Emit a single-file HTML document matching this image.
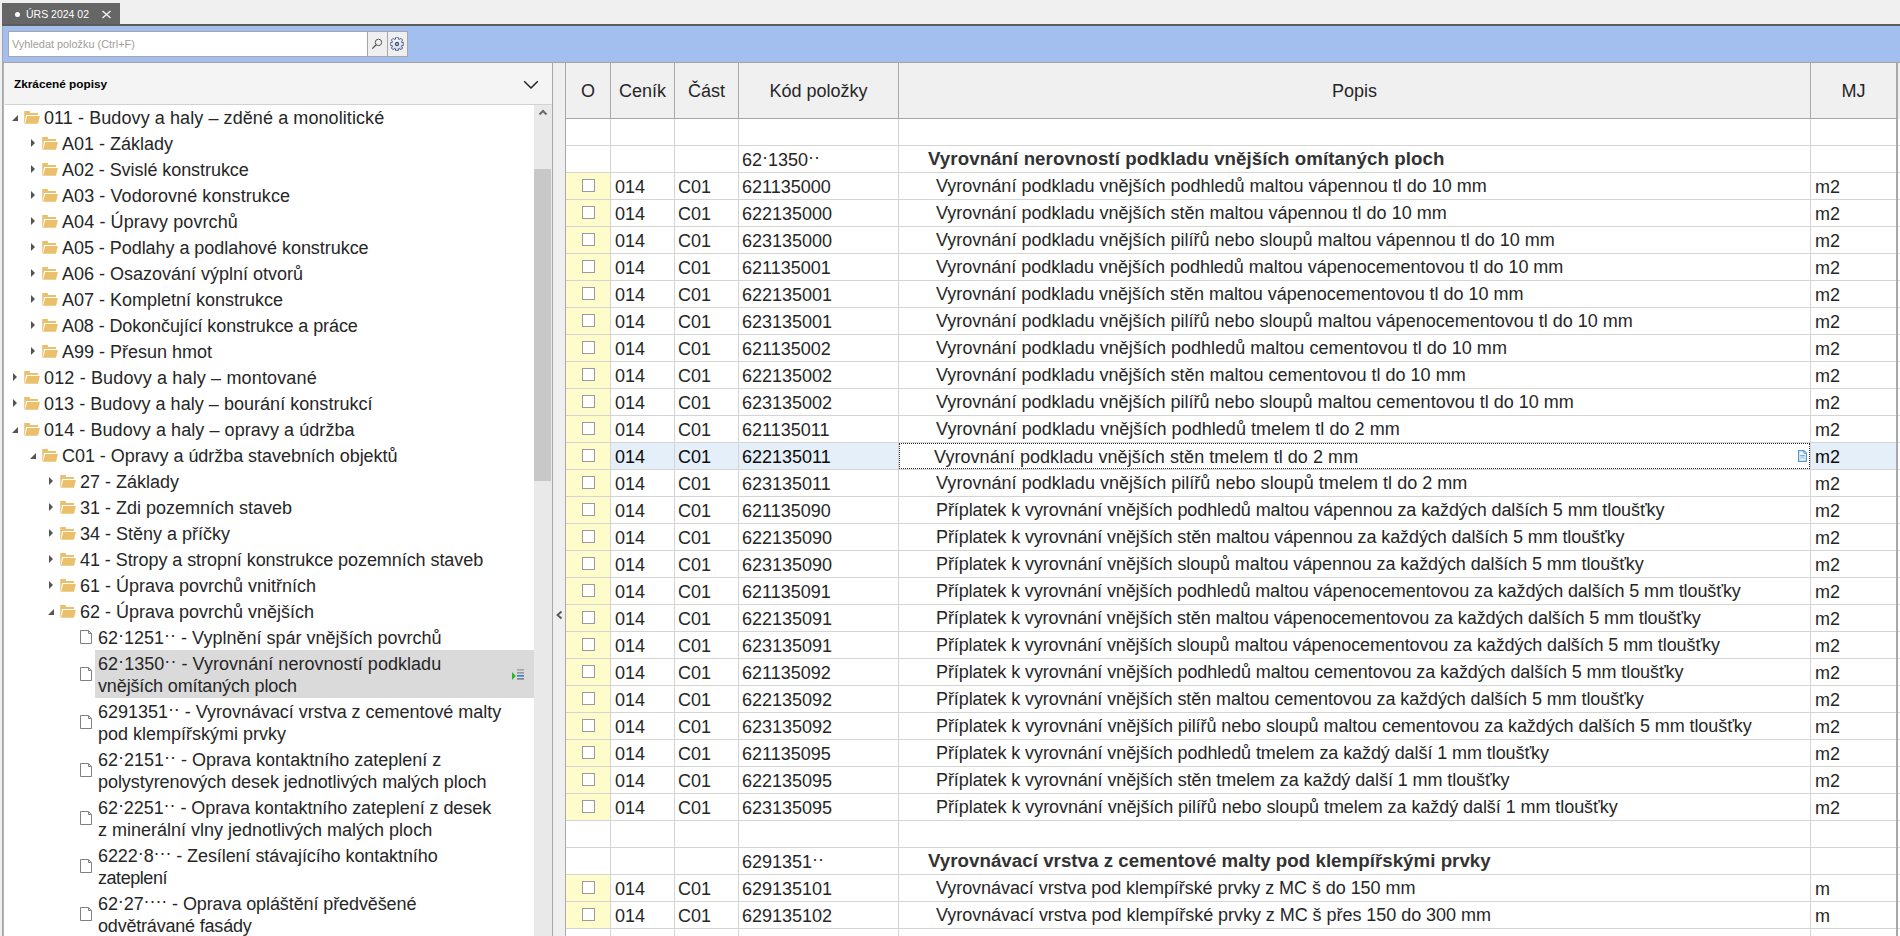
<!DOCTYPE html><html><head><meta charset="utf-8"><title>URS</title><style>
*{box-sizing:border-box}
html,body{margin:0;padding:0}
body{width:1900px;height:936px;overflow:hidden;position:relative;background:#f0f0f0;font-family:"Liberation Sans",sans-serif;color:#333}
.a{position:absolute}
.t{position:absolute;white-space:pre;font-size:18px;line-height:22px;color:#262626}
.hl{position:absolute;left:0;width:1px;background:#a8a8a8}
.vl{position:absolute;width:1px}
.cb{position:absolute;left:582px;width:13px;height:13px;border:1px solid #9b9b9f;background:#fff}
.tri{position:absolute}
.d{position:relative;top:-3px}
</style></head><body>
<div class="a" style="left:2px;top:3px;width:118px;height:22px;background:#666"></div>
<div class="a" style="left:14.5px;top:11.8px;width:5.6px;height:5.6px;border-radius:50%;background:#fff"></div>
<div class="t" style="left:26px;top:4px;font-size:10.5px;line-height:20px;color:#fff">ÚRS 2024 02</div>
<svg class="a" style="left:101px;top:10px" width="11" height="9" viewBox="0 0 11 9"><path d="M1.5 1 L9.5 8 M9.5 1 L1.5 8" stroke="#f2f2f2" stroke-width="1.4"/></svg>
<div class="a" style="left:2px;top:24px;width:1898px;height:2px;background:#5c5c5a"></div>
<div class="a" style="left:2px;top:26px;width:1px;height:910px;background:#a6a6a6"></div>
<div class="a" style="left:3px;top:26px;width:1897px;height:36px;background:#a2bff0"></div>
<div class="a" style="left:3px;top:62px;width:1897px;height:1px;background:#a4a4a4"></div>
<div class="a" style="left:8px;top:31px;width:360px;height:26px;border:1px solid #a6a6a6;background:#fff"></div>
<div class="t" style="left:12px;top:34px;font-size:10.9px;line-height:20px;color:#a59d98">Vyhledat položku (Ctrl+F)</div>
<div class="a" style="left:367px;top:31px;width:21px;height:26px;border:1px solid #a6a6a6;background:#efefef"></div>
<div class="a" style="left:387px;top:31px;width:21px;height:26px;border:1px solid #a6a6a6;background:#efefef"></div>
<svg class="a" style="left:370px;top:37px" width="14" height="14" viewBox="0 0 14 14"><circle cx="8.5" cy="5.4" r="3.2" fill="none" stroke="#555" stroke-width="1"/><path d="M6.2 7.7 L2.3 11.6" stroke="#555" stroke-width="1.3"/></svg>
<svg class="a" style="left:390px;top:37px" width="14" height="14" viewBox="0 0 14 14"><defs><radialGradient id="gg" cx="0.45" cy="0.35" r="0.7"><stop offset="0" stop-color="#fafbfd"/><stop offset="0.6" stop-color="#dde2ec"/><stop offset="1" stop-color="#a9b3c8"/></radialGradient></defs><path d="M5.37 2.27 L5.72 0.42 L6.40 0.13 L7.60 0.13 L8.28 0.42 L8.63 2.27 L9.19 2.51 L10.75 1.45 L11.44 1.71 L12.29 2.56 L12.55 3.25 L11.49 4.81 L11.73 5.37 L13.58 5.72 L13.87 6.40 L13.87 7.60 L13.58 8.28 L11.73 8.63 L11.49 9.19 L12.55 10.75 L12.29 11.44 L11.44 12.29 L10.75 12.55 L9.19 11.49 L8.63 11.73 L8.28 13.58 L7.60 13.87 L6.40 13.87 L5.72 13.58 L5.37 11.73 L4.81 11.49 L3.25 12.55 L2.56 12.29 L1.71 11.44 L1.45 10.75 L2.51 9.19 L2.27 8.63 L0.42 8.28 L0.13 7.60 L0.13 6.40 L0.42 5.72 L2.27 5.37 L2.51 4.81 L1.45 3.25 L1.71 2.56 L2.56 1.71 L3.25 1.45 L4.81 2.51 Z" fill="url(#gg)" stroke="#3b4d7e" stroke-width="0.9" stroke-linejoin="round"/><circle cx="7" cy="7" r="1.6" fill="#c9ccd3" stroke="#33467a" stroke-width="1.1"/></svg>
<div class="a" style="left:3px;top:63px;width:1px;height:873px;background:#b4b4b4"></div>
<div class="a" style="left:4px;top:63px;width:548px;height:41px;background:#f4f4f4"></div>
<div class="t" style="left:14px;top:74px;font-size:11.8px;line-height:20px;font-weight:bold;color:#000">Zkrácené popisy</div>
<svg class="a" style="left:523px;top:80px" width="16" height="10" viewBox="0 0 16 10"><path d="M1.2 1.2 L8 8 L14.8 1.2" fill="none" stroke="#222" stroke-width="1.5"/></svg>
<div class="a" style="left:5px;top:104px;width:547px;height:1px;background:#d2d2d2"></div>
<div class="a" style="left:4px;top:105px;width:530px;height:831px;background:#fff"></div>
<div class="a" style="left:534px;top:105px;width:18px;height:831px;background:#e9e9e9"></div>
<div class="a" style="left:534px;top:169px;width:17px;height:312px;background:#c8c8c8"></div>
<svg class="a" style="left:538px;top:108px" width="10" height="8" viewBox="0 0 10 8"><path d="M1.5 6.5 L5 3 L8.5 6.5" fill="none" stroke="#6a6a6a" stroke-width="2"/></svg>
<div class="a" style="left:552px;top:63px;width:1px;height:873px;background:#a8a8a8"></div>
<div class="a" style="left:553px;top:63px;width:12px;height:873px;background:#efefef"></div>
<svg class="a" style="left:555px;top:610px" width="9" height="10" viewBox="0 0 9 10"><path d="M6.5 1.5 L2.5 5 L6.5 8.5" fill="none" stroke="#555" stroke-width="1.8"/></svg>
<div class="a" style="left:4px;top:105px;width:530px;height:831px;overflow:hidden">
<svg class="a" style="left:8px;top:10px" width="7" height="7" viewBox="0 0 7 7"><path d="M6 0 V6 H0 Z" fill="#555"/></svg>
<svg class="a" style="left:20px;top:6px" width="17" height="14" viewBox="0 0 17 14"><path d="M0.2 0 H5.9 V2 H14 V3.9 H2 L0.6 12.8 H0.2 Z" fill="#ebc06d"/><path d="M3.2 5 H15.9 L14 12.8 H1.1 Z" fill="#ebc06d"/></svg>
<div class="t" style="left:40px;top:2px;letter-spacing:0.0825px">011 - Budovy a haly – zděné a monolitické</div>
<svg class="a" style="left:27px;top:34px" width="5" height="9" viewBox="0 0 5 9"><path d="M0 0 L4 4 L0 8 Z" fill="#555"/></svg>
<svg class="a" style="left:38px;top:32px" width="17" height="14" viewBox="0 0 17 14"><path d="M0.2 0 H5.9 V2 H14 V3.9 H2 L0.6 12.8 H0.2 Z" fill="#ebc06d"/><path d="M3.2 5 H15.9 L14 12.8 H1.1 Z" fill="#ebc06d"/></svg>
<div class="t" style="left:58px;top:28px">A01 - Základy</div>
<svg class="a" style="left:27px;top:60px" width="5" height="9" viewBox="0 0 5 9"><path d="M0 0 L4 4 L0 8 Z" fill="#555"/></svg>
<svg class="a" style="left:38px;top:58px" width="17" height="14" viewBox="0 0 17 14"><path d="M0.2 0 H5.9 V2 H14 V3.9 H2 L0.6 12.8 H0.2 Z" fill="#ebc06d"/><path d="M3.2 5 H15.9 L14 12.8 H1.1 Z" fill="#ebc06d"/></svg>
<div class="t" style="left:58px;top:54px;letter-spacing:-0.0591px">A02 - Svislé konstrukce</div>
<svg class="a" style="left:27px;top:86px" width="5" height="9" viewBox="0 0 5 9"><path d="M0 0 L4 4 L0 8 Z" fill="#555"/></svg>
<svg class="a" style="left:38px;top:84px" width="17" height="14" viewBox="0 0 17 14"><path d="M0.2 0 H5.9 V2 H14 V3.9 H2 L0.6 12.8 H0.2 Z" fill="#ebc06d"/><path d="M3.2 5 H15.9 L14 12.8 H1.1 Z" fill="#ebc06d"/></svg>
<div class="t" style="left:58px;top:80px;letter-spacing:0.0760px">A03 - Vodorovné konstrukce</div>
<svg class="a" style="left:27px;top:112px" width="5" height="9" viewBox="0 0 5 9"><path d="M0 0 L4 4 L0 8 Z" fill="#555"/></svg>
<svg class="a" style="left:38px;top:110px" width="17" height="14" viewBox="0 0 17 14"><path d="M0.2 0 H5.9 V2 H14 V3.9 H2 L0.6 12.8 H0.2 Z" fill="#ebc06d"/><path d="M3.2 5 H15.9 L14 12.8 H1.1 Z" fill="#ebc06d"/></svg>
<div class="t" style="left:58px;top:106px;letter-spacing:0.0895px">A04 - Úpravy povrchů</div>
<svg class="a" style="left:27px;top:138px" width="5" height="9" viewBox="0 0 5 9"><path d="M0 0 L4 4 L0 8 Z" fill="#555"/></svg>
<svg class="a" style="left:38px;top:136px" width="17" height="14" viewBox="0 0 17 14"><path d="M0.2 0 H5.9 V2 H14 V3.9 H2 L0.6 12.8 H0.2 Z" fill="#ebc06d"/><path d="M3.2 5 H15.9 L14 12.8 H1.1 Z" fill="#ebc06d"/></svg>
<div class="t" style="left:58px;top:132px;letter-spacing:-0.0457px">A05 - Podlahy a podlahové konstrukce</div>
<svg class="a" style="left:27px;top:164px" width="5" height="9" viewBox="0 0 5 9"><path d="M0 0 L4 4 L0 8 Z" fill="#555"/></svg>
<svg class="a" style="left:38px;top:162px" width="17" height="14" viewBox="0 0 17 14"><path d="M0.2 0 H5.9 V2 H14 V3.9 H2 L0.6 12.8 H0.2 Z" fill="#ebc06d"/><path d="M3.2 5 H15.9 L14 12.8 H1.1 Z" fill="#ebc06d"/></svg>
<div class="t" style="left:58px;top:158px">A06 - Osazování výplní otvorů</div>
<svg class="a" style="left:27px;top:190px" width="5" height="9" viewBox="0 0 5 9"><path d="M0 0 L4 4 L0 8 Z" fill="#555"/></svg>
<svg class="a" style="left:38px;top:188px" width="17" height="14" viewBox="0 0 17 14"><path d="M0.2 0 H5.9 V2 H14 V3.9 H2 L0.6 12.8 H0.2 Z" fill="#ebc06d"/><path d="M3.2 5 H15.9 L14 12.8 H1.1 Z" fill="#ebc06d"/></svg>
<div class="t" style="left:58px;top:184px">A07 - Kompletní konstrukce</div>
<svg class="a" style="left:27px;top:216px" width="5" height="9" viewBox="0 0 5 9"><path d="M0 0 L4 4 L0 8 Z" fill="#555"/></svg>
<svg class="a" style="left:38px;top:214px" width="17" height="14" viewBox="0 0 17 14"><path d="M0.2 0 H5.9 V2 H14 V3.9 H2 L0.6 12.8 H0.2 Z" fill="#ebc06d"/><path d="M3.2 5 H15.9 L14 12.8 H1.1 Z" fill="#ebc06d"/></svg>
<div class="t" style="left:58px;top:210px;letter-spacing:-0.0943px">A08 - Dokončující konstrukce a práce</div>
<svg class="a" style="left:27px;top:242px" width="5" height="9" viewBox="0 0 5 9"><path d="M0 0 L4 4 L0 8 Z" fill="#555"/></svg>
<svg class="a" style="left:38px;top:240px" width="17" height="14" viewBox="0 0 17 14"><path d="M0.2 0 H5.9 V2 H14 V3.9 H2 L0.6 12.8 H0.2 Z" fill="#ebc06d"/><path d="M3.2 5 H15.9 L14 12.8 H1.1 Z" fill="#ebc06d"/></svg>
<div class="t" style="left:58px;top:236px">A99 - Přesun hmot</div>
<svg class="a" style="left:9px;top:268px" width="5" height="9" viewBox="0 0 5 9"><path d="M0 0 L4 4 L0 8 Z" fill="#555"/></svg>
<svg class="a" style="left:20px;top:266px" width="17" height="14" viewBox="0 0 17 14"><path d="M0.2 0 H5.9 V2 H14 V3.9 H2 L0.6 12.8 H0.2 Z" fill="#ebc06d"/><path d="M3.2 5 H15.9 L14 12.8 H1.1 Z" fill="#ebc06d"/></svg>
<div class="t" style="left:40px;top:262px;letter-spacing:0.1500px">012 - Budovy a haly – montované</div>
<svg class="a" style="left:9px;top:294px" width="5" height="9" viewBox="0 0 5 9"><path d="M0 0 L4 4 L0 8 Z" fill="#555"/></svg>
<svg class="a" style="left:20px;top:292px" width="17" height="14" viewBox="0 0 17 14"><path d="M0.2 0 H5.9 V2 H14 V3.9 H2 L0.6 12.8 H0.2 Z" fill="#ebc06d"/><path d="M3.2 5 H15.9 L14 12.8 H1.1 Z" fill="#ebc06d"/></svg>
<div class="t" style="left:40px;top:288px;letter-spacing:0.0359px">013 - Budovy a haly – bourání konstrukcí</div>
<svg class="a" style="left:8px;top:322px" width="7" height="7" viewBox="0 0 7 7"><path d="M6 0 V6 H0 Z" fill="#555"/></svg>
<svg class="a" style="left:20px;top:318px" width="17" height="14" viewBox="0 0 17 14"><path d="M0.2 0 H5.9 V2 H14 V3.9 H2 L0.6 12.8 H0.2 Z" fill="#ebc06d"/><path d="M3.2 5 H15.9 L14 12.8 H1.1 Z" fill="#ebc06d"/></svg>
<div class="t" style="left:40px;top:314px;letter-spacing:0.0667px">014 - Budovy a haly – opravy a údržba</div>
<svg class="a" style="left:26px;top:348px" width="7" height="7" viewBox="0 0 7 7"><path d="M6 0 V6 H0 Z" fill="#555"/></svg>
<svg class="a" style="left:38px;top:344px" width="17" height="14" viewBox="0 0 17 14"><path d="M0.2 0 H5.9 V2 H14 V3.9 H2 L0.6 12.8 H0.2 Z" fill="#ebc06d"/><path d="M3.2 5 H15.9 L14 12.8 H1.1 Z" fill="#ebc06d"/></svg>
<div class="t" style="left:58px;top:340px;letter-spacing:-0.0436px">C01 - Opravy a údržba stavebních objektů</div>
<svg class="a" style="left:45px;top:372px" width="5" height="9" viewBox="0 0 5 9"><path d="M0 0 L4 4 L0 8 Z" fill="#555"/></svg>
<svg class="a" style="left:56px;top:370px" width="17" height="14" viewBox="0 0 17 14"><path d="M0.2 0 H5.9 V2 H14 V3.9 H2 L0.6 12.8 H0.2 Z" fill="#ebc06d"/><path d="M3.2 5 H15.9 L14 12.8 H1.1 Z" fill="#ebc06d"/></svg>
<div class="t" style="left:76px;top:366px">27 - Základy</div>
<svg class="a" style="left:45px;top:398px" width="5" height="9" viewBox="0 0 5 9"><path d="M0 0 L4 4 L0 8 Z" fill="#555"/></svg>
<svg class="a" style="left:56px;top:396px" width="17" height="14" viewBox="0 0 17 14"><path d="M0.2 0 H5.9 V2 H14 V3.9 H2 L0.6 12.8 H0.2 Z" fill="#ebc06d"/><path d="M3.2 5 H15.9 L14 12.8 H1.1 Z" fill="#ebc06d"/></svg>
<div class="t" style="left:76px;top:392px">31 - Zdi pozemních staveb</div>
<svg class="a" style="left:45px;top:424px" width="5" height="9" viewBox="0 0 5 9"><path d="M0 0 L4 4 L0 8 Z" fill="#555"/></svg>
<svg class="a" style="left:56px;top:422px" width="17" height="14" viewBox="0 0 17 14"><path d="M0.2 0 H5.9 V2 H14 V3.9 H2 L0.6 12.8 H0.2 Z" fill="#ebc06d"/><path d="M3.2 5 H15.9 L14 12.8 H1.1 Z" fill="#ebc06d"/></svg>
<div class="t" style="left:76px;top:418px">34 - Stěny a příčky</div>
<svg class="a" style="left:45px;top:450px" width="5" height="9" viewBox="0 0 5 9"><path d="M0 0 L4 4 L0 8 Z" fill="#555"/></svg>
<svg class="a" style="left:56px;top:448px" width="17" height="14" viewBox="0 0 17 14"><path d="M0.2 0 H5.9 V2 H14 V3.9 H2 L0.6 12.8 H0.2 Z" fill="#ebc06d"/><path d="M3.2 5 H15.9 L14 12.8 H1.1 Z" fill="#ebc06d"/></svg>
<div class="t" style="left:76px;top:444px;letter-spacing:-0.0625px">41 - Stropy a stropní konstrukce pozemních staveb</div>
<svg class="a" style="left:45px;top:476px" width="5" height="9" viewBox="0 0 5 9"><path d="M0 0 L4 4 L0 8 Z" fill="#555"/></svg>
<svg class="a" style="left:56px;top:474px" width="17" height="14" viewBox="0 0 17 14"><path d="M0.2 0 H5.9 V2 H14 V3.9 H2 L0.6 12.8 H0.2 Z" fill="#ebc06d"/><path d="M3.2 5 H15.9 L14 12.8 H1.1 Z" fill="#ebc06d"/></svg>
<div class="t" style="left:76px;top:470px">61 - Úprava povrchů vnitřních</div>
<svg class="a" style="left:44px;top:504px" width="7" height="7" viewBox="0 0 7 7"><path d="M6 0 V6 H0 Z" fill="#555"/></svg>
<svg class="a" style="left:56px;top:500px" width="17" height="14" viewBox="0 0 17 14"><path d="M0.2 0 H5.9 V2 H14 V3.9 H2 L0.6 12.8 H0.2 Z" fill="#ebc06d"/><path d="M3.2 5 H15.9 L14 12.8 H1.1 Z" fill="#ebc06d"/></svg>
<div class="t" style="left:76px;top:496px">62 - Úprava povrchů vnějších</div>
<svg class="a" style="left:76px;top:525px" width="13" height="15" viewBox="0 0 13 15"><path d="M0.5 0.5 H8.5 L11.5 3.5 V13.5 H0.5 Z" fill="#fff" stroke="#808080"/><path d="M8.5 0.5 V3.5 H11.5" fill="none" stroke="#808080"/></svg>
<div class="t" style="left:94px;top:522px">62<span class="d">·</span>1251<span class="d">·</span><span class="d">·</span> - Vyplnění spár vnějších povrchů</div>
<div class="a" style="left:91px;top:545px;width:439px;height:48px;background:#dadada"></div>
<svg class="a" style="left:507px;top:560px" width="14" height="16" viewBox="0 0 14 16"><path d="M1 7 L4.8 11 L1 15 Z" fill="#2db52d"/><rect x="6" y="4" width="7" height="1.7" fill="#a8a8a8"/><rect x="6" y="7" width="7" height="1.7" fill="#999"/><rect x="6" y="10" width="7" height="1.7" fill="#2f86dd"/><rect x="6" y="13" width="7" height="1.7" fill="#858585"/></svg>
<svg class="a" style="left:76px;top:562px" width="13" height="15" viewBox="0 0 13 15"><path d="M0.5 0.5 H8.5 L11.5 3.5 V13.5 H0.5 Z" fill="#fff" stroke="#808080"/><path d="M8.5 0.5 V3.5 H11.5" fill="none" stroke="#808080"/></svg>
<div class="t" style="left:94px;top:548px;letter-spacing:0.0400px">62<span class="d">·</span>1350<span class="d">·</span><span class="d">·</span> - Vyrovnání nerovností podkladu</div>
<div class="t" style="left:94px;top:570px;letter-spacing:-0.1304px">vnějších omítaných ploch</div>
<svg class="a" style="left:76px;top:610px" width="13" height="15" viewBox="0 0 13 15"><path d="M0.5 0.5 H8.5 L11.5 3.5 V13.5 H0.5 Z" fill="#fff" stroke="#808080"/><path d="M8.5 0.5 V3.5 H11.5" fill="none" stroke="#808080"/></svg>
<div class="t" style="left:94px;top:596px;letter-spacing:-0.0277px">6291351<span class="d">·</span><span class="d">·</span> - Vyrovnávací vrstva z cementové malty</div>
<div class="t" style="left:94px;top:618px">pod klempířskými prvky</div>
<svg class="a" style="left:76px;top:658px" width="13" height="15" viewBox="0 0 13 15"><path d="M0.5 0.5 H8.5 L11.5 3.5 V13.5 H0.5 Z" fill="#fff" stroke="#808080"/><path d="M8.5 0.5 V3.5 H11.5" fill="none" stroke="#808080"/></svg>
<div class="t" style="left:94px;top:644px">62<span class="d">·</span>2151<span class="d">·</span><span class="d">·</span> - Oprava kontaktního zateplení z</div>
<div class="t" style="left:94px;top:666px;letter-spacing:-0.0565px">polystyrenových desek jednotlivých malých ploch</div>
<svg class="a" style="left:76px;top:706px" width="13" height="15" viewBox="0 0 13 15"><path d="M0.5 0.5 H8.5 L11.5 3.5 V13.5 H0.5 Z" fill="#fff" stroke="#808080"/><path d="M8.5 0.5 V3.5 H11.5" fill="none" stroke="#808080"/></svg>
<div class="t" style="left:94px;top:692px;letter-spacing:-0.0660px">62<span class="d">·</span>2251<span class="d">·</span><span class="d">·</span> - Oprava kontaktního zateplení z desek</div>
<div class="t" style="left:94px;top:714px">z minerální vlny jednotlivých malých ploch</div>
<svg class="a" style="left:76px;top:754px" width="13" height="15" viewBox="0 0 13 15"><path d="M0.5 0.5 H8.5 L11.5 3.5 V13.5 H0.5 Z" fill="#fff" stroke="#808080"/><path d="M8.5 0.5 V3.5 H11.5" fill="none" stroke="#808080"/></svg>
<div class="t" style="left:94px;top:740px;letter-spacing:-0.0814px">6222<span class="d">·</span>8<span class="d">·</span><span class="d">·</span><span class="d">·</span> - Zesílení stávajícího kontaktního</div>
<div class="t" style="left:94px;top:762px;letter-spacing:-0.4500px">zateplení</div>
<svg class="a" style="left:76px;top:802px" width="13" height="15" viewBox="0 0 13 15"><path d="M0.5 0.5 H8.5 L11.5 3.5 V13.5 H0.5 Z" fill="#fff" stroke="#808080"/><path d="M8.5 0.5 V3.5 H11.5" fill="none" stroke="#808080"/></svg>
<div class="t" style="left:94px;top:788px;letter-spacing:-0.1000px">62<span class="d">·</span>27<span class="d">·</span><span class="d">·</span><span class="d">·</span><span class="d">·</span> - Oprava opláštění předvěšené</div>
<div class="t" style="left:94px;top:810px;letter-spacing:-0.1941px">odvětrávané fasády</div>
</div>
<div class="a" style="left:565px;top:63px;width:1px;height:873px;background:#a8a8a8"></div>
<div class="a" style="left:566px;top:63px;width:1330px;height:55px;background:#f0f0f0"></div>
<div class="a" style="left:566px;top:119px;width:1334px;height:817px;background:#fff"></div>
<div class="a" style="left:566px;top:118px;width:1330px;height:1px;background:#a8a8a8"></div>
<div class="a" style="left:610px;top:63px;width:1px;height:56px;background:#ababab"></div>
<div class="a" style="left:674px;top:63px;width:1px;height:56px;background:#ababab"></div>
<div class="a" style="left:738px;top:63px;width:1px;height:56px;background:#ababab"></div>
<div class="a" style="left:898px;top:63px;width:1px;height:56px;background:#ababab"></div>
<div class="a" style="left:1810px;top:63px;width:1px;height:56px;background:#ababab"></div>
<div class="a" style="left:1898px;top:63px;width:2px;height:56px;background:#efefef"></div>
<div class="t" style="left:566px;top:80px;width:44px;text-align:center">O</div>
<div class="t" style="left:611px;top:80px;width:63px;text-align:center">Ceník</div>
<div class="t" style="left:675px;top:80px;width:63px;text-align:center">Část</div>
<div class="t" style="left:739px;top:80px;width:159px;text-align:center">Kód položky</div>
<div class="t" style="left:899px;top:80px;width:911px;text-align:center">Popis</div>
<div class="t" style="left:1811px;top:80px;width:85px;text-align:center">MJ</div>
<div class="a" style="left:566px;top:145px;width:1334px;height:1px;background:#d4d4d4"></div>
<div class="t" style="left:742px;top:149px">62<span class="d">·</span>1350<span class="d">·</span><span class="d">·</span></div>
<div class="t" style="left:928px;top:148px;font-weight:bold;font-size:18.7px;color:#333;letter-spacing:0.0774px">Vyrovnání nerovností podkladu vnějších omítaných ploch</div>
<div class="a" style="left:566px;top:172px;width:1334px;height:1px;background:#d4d4d4"></div>
<div class="a" style="left:566px;top:173px;width:44px;height:26px;background:#fefcca"></div>
<div class="cb" style="top:179px"></div>
<div class="t" style="left:615px;top:176px">014</div>
<div class="t" style="left:678px;top:176px">C01</div>
<div class="t" style="left:742px;top:176px">621135000</div>
<div class="t" style="left:936px;top:175px">Vyrovnání podkladu vnějších podhledů maltou vápennou tl do 10 mm</div>
<div class="t" style="left:1815px;top:176px">m2</div>
<div class="a" style="left:566px;top:199px;width:1334px;height:1px;background:#d4d4d4"></div>
<div class="a" style="left:566px;top:200px;width:44px;height:26px;background:#fefcca"></div>
<div class="cb" style="top:206px"></div>
<div class="t" style="left:615px;top:203px">014</div>
<div class="t" style="left:678px;top:203px">C01</div>
<div class="t" style="left:742px;top:203px">622135000</div>
<div class="t" style="left:936px;top:202px">Vyrovnání podkladu vnějších stěn maltou vápennou tl do 10 mm</div>
<div class="t" style="left:1815px;top:203px">m2</div>
<div class="a" style="left:566px;top:226px;width:1334px;height:1px;background:#d4d4d4"></div>
<div class="a" style="left:566px;top:227px;width:44px;height:26px;background:#fefcca"></div>
<div class="cb" style="top:233px"></div>
<div class="t" style="left:615px;top:230px">014</div>
<div class="t" style="left:678px;top:230px">C01</div>
<div class="t" style="left:742px;top:230px">623135000</div>
<div class="t" style="left:936px;top:229px">Vyrovnání podkladu vnějších pilířů nebo sloupů maltou vápennou tl do 10 mm</div>
<div class="t" style="left:1815px;top:230px">m2</div>
<div class="a" style="left:566px;top:253px;width:1334px;height:1px;background:#d4d4d4"></div>
<div class="a" style="left:566px;top:254px;width:44px;height:26px;background:#fefcca"></div>
<div class="cb" style="top:260px"></div>
<div class="t" style="left:615px;top:257px">014</div>
<div class="t" style="left:678px;top:257px">C01</div>
<div class="t" style="left:742px;top:257px">621135001</div>
<div class="t" style="left:936px;top:256px;letter-spacing:-0.0197px">Vyrovnání podkladu vnějších podhledů maltou vápenocementovou tl do 10 mm</div>
<div class="t" style="left:1815px;top:257px">m2</div>
<div class="a" style="left:566px;top:280px;width:1334px;height:1px;background:#d4d4d4"></div>
<div class="a" style="left:566px;top:281px;width:44px;height:26px;background:#fefcca"></div>
<div class="cb" style="top:287px"></div>
<div class="t" style="left:615px;top:284px">014</div>
<div class="t" style="left:678px;top:284px">C01</div>
<div class="t" style="left:742px;top:284px">622135001</div>
<div class="t" style="left:936px;top:283px;letter-spacing:-0.0179px">Vyrovnání podkladu vnějších stěn maltou vápenocementovou tl do 10 mm</div>
<div class="t" style="left:1815px;top:284px">m2</div>
<div class="a" style="left:566px;top:307px;width:1334px;height:1px;background:#d4d4d4"></div>
<div class="a" style="left:566px;top:308px;width:44px;height:26px;background:#fefcca"></div>
<div class="cb" style="top:314px"></div>
<div class="t" style="left:615px;top:311px">014</div>
<div class="t" style="left:678px;top:311px">C01</div>
<div class="t" style="left:742px;top:311px">623135001</div>
<div class="t" style="left:936px;top:310px">Vyrovnání podkladu vnějších pilířů nebo sloupů maltou vápenocementovou tl do 10 mm</div>
<div class="t" style="left:1815px;top:311px">m2</div>
<div class="a" style="left:566px;top:334px;width:1334px;height:1px;background:#d4d4d4"></div>
<div class="a" style="left:566px;top:335px;width:44px;height:26px;background:#fefcca"></div>
<div class="cb" style="top:341px"></div>
<div class="t" style="left:615px;top:338px">014</div>
<div class="t" style="left:678px;top:338px">C01</div>
<div class="t" style="left:742px;top:338px">621135002</div>
<div class="t" style="left:936px;top:337px;letter-spacing:0.0185px">Vyrovnání podkladu vnějších podhledů maltou cementovou tl do 10 mm</div>
<div class="t" style="left:1815px;top:338px">m2</div>
<div class="a" style="left:566px;top:361px;width:1334px;height:1px;background:#d4d4d4"></div>
<div class="a" style="left:566px;top:362px;width:44px;height:26px;background:#fefcca"></div>
<div class="cb" style="top:368px"></div>
<div class="t" style="left:615px;top:365px">014</div>
<div class="t" style="left:678px;top:365px">C01</div>
<div class="t" style="left:742px;top:365px">622135002</div>
<div class="t" style="left:936px;top:364px">Vyrovnání podkladu vnějších stěn maltou cementovou tl do 10 mm</div>
<div class="t" style="left:1815px;top:365px">m2</div>
<div class="a" style="left:566px;top:388px;width:1334px;height:1px;background:#d4d4d4"></div>
<div class="a" style="left:566px;top:389px;width:44px;height:26px;background:#fefcca"></div>
<div class="cb" style="top:395px"></div>
<div class="t" style="left:615px;top:392px">014</div>
<div class="t" style="left:678px;top:392px">C01</div>
<div class="t" style="left:742px;top:392px">623135002</div>
<div class="t" style="left:936px;top:391px">Vyrovnání podkladu vnějších pilířů nebo sloupů maltou cementovou tl do 10 mm</div>
<div class="t" style="left:1815px;top:392px">m2</div>
<div class="a" style="left:566px;top:415px;width:1334px;height:1px;background:#d4d4d4"></div>
<div class="a" style="left:566px;top:416px;width:44px;height:26px;background:#fefcca"></div>
<div class="cb" style="top:422px"></div>
<div class="t" style="left:615px;top:419px">014</div>
<div class="t" style="left:678px;top:419px">C01</div>
<div class="t" style="left:742px;top:419px">621135011</div>
<div class="t" style="left:936px;top:418px;letter-spacing:0.0396px">Vyrovnání podkladu vnějších podhledů tmelem tl do 2 mm</div>
<div class="t" style="left:1815px;top:419px">m2</div>
<div class="a" style="left:566px;top:442px;width:1334px;height:1px;background:#d4d4d4"></div>
<div class="a" style="left:566px;top:443px;width:44px;height:26px;background:#fefcca"></div>
<div class="cb" style="top:449px"></div>
<div class="a" style="left:611px;top:443px;width:287px;height:26px;background:#e4eff9"></div>
<div class="a" style="left:1811px;top:443px;width:85px;height:26px;background:#e4eff9"></div>
<div class="t" style="left:615px;top:446px;color:#0a0a0a">014</div>
<div class="t" style="left:678px;top:446px;color:#0a0a0a">C01</div>
<div class="t" style="left:742px;top:446px;color:#0a0a0a">622135011</div>
<div class="t" style="left:934px;top:446px;letter-spacing:0.0531px">Vyrovnání podkladu vnějších stěn tmelem tl do 2 mm</div>
<div class="t" style="left:1815px;top:446px;color:#0a0a0a">m2</div>
<div class="a" style="left:566px;top:469px;width:1334px;height:1px;background:#d4d4d4"></div>
<div class="a" style="left:566px;top:470px;width:44px;height:26px;background:#fefcca"></div>
<div class="cb" style="top:476px"></div>
<div class="t" style="left:615px;top:473px">014</div>
<div class="t" style="left:678px;top:473px">C01</div>
<div class="t" style="left:742px;top:473px">623135011</div>
<div class="t" style="left:936px;top:472px;letter-spacing:0.0270px">Vyrovnání podkladu vnějších pilířů nebo sloupů tmelem tl do 2 mm</div>
<div class="t" style="left:1815px;top:473px">m2</div>
<div class="a" style="left:566px;top:496px;width:1334px;height:1px;background:#d4d4d4"></div>
<div class="a" style="left:566px;top:497px;width:44px;height:26px;background:#fefcca"></div>
<div class="cb" style="top:503px"></div>
<div class="t" style="left:615px;top:500px">014</div>
<div class="t" style="left:678px;top:500px">C01</div>
<div class="t" style="left:742px;top:500px">621135090</div>
<div class="t" style="left:936px;top:499px;letter-spacing:-0.0874px">Příplatek k vyrovnání vnějších podhledů maltou vápennou za každých dalších 5 mm tloušťky</div>
<div class="t" style="left:1815px;top:500px">m2</div>
<div class="a" style="left:566px;top:523px;width:1334px;height:1px;background:#d4d4d4"></div>
<div class="a" style="left:566px;top:524px;width:44px;height:26px;background:#fefcca"></div>
<div class="cb" style="top:530px"></div>
<div class="t" style="left:615px;top:527px">014</div>
<div class="t" style="left:678px;top:527px">C01</div>
<div class="t" style="left:742px;top:527px">622135090</div>
<div class="t" style="left:936px;top:526px;letter-spacing:-0.0904px">Příplatek k vyrovnání vnějších stěn maltou vápennou za každých dalších 5 mm tloušťky</div>
<div class="t" style="left:1815px;top:527px">m2</div>
<div class="a" style="left:566px;top:550px;width:1334px;height:1px;background:#d4d4d4"></div>
<div class="a" style="left:566px;top:551px;width:44px;height:26px;background:#fefcca"></div>
<div class="cb" style="top:557px"></div>
<div class="t" style="left:615px;top:554px">014</div>
<div class="t" style="left:678px;top:554px">C01</div>
<div class="t" style="left:742px;top:554px">623135090</div>
<div class="t" style="left:936px;top:553px;letter-spacing:-0.0871px">Příplatek k vyrovnání vnějších sloupů maltou vápennou za každých dalších 5 mm tloušťky</div>
<div class="t" style="left:1815px;top:554px">m2</div>
<div class="a" style="left:566px;top:577px;width:1334px;height:1px;background:#d4d4d4"></div>
<div class="a" style="left:566px;top:578px;width:44px;height:26px;background:#fefcca"></div>
<div class="cb" style="top:584px"></div>
<div class="t" style="left:615px;top:581px">014</div>
<div class="t" style="left:678px;top:581px">C01</div>
<div class="t" style="left:742px;top:581px">621135091</div>
<div class="t" style="left:936px;top:580px;letter-spacing:-0.0989px">Příplatek k vyrovnání vnějších podhledů maltou vápenocementovou za každých dalších 5 mm tloušťky</div>
<div class="t" style="left:1815px;top:581px">m2</div>
<div class="a" style="left:566px;top:604px;width:1334px;height:1px;background:#d4d4d4"></div>
<div class="a" style="left:566px;top:605px;width:44px;height:26px;background:#fefcca"></div>
<div class="cb" style="top:611px"></div>
<div class="t" style="left:615px;top:608px">014</div>
<div class="t" style="left:678px;top:608px">C01</div>
<div class="t" style="left:742px;top:608px">622135091</div>
<div class="t" style="left:936px;top:607px;letter-spacing:-0.1022px">Příplatek k vyrovnání vnějších stěn maltou vápenocementovou za každých dalších 5 mm tloušťky</div>
<div class="t" style="left:1815px;top:608px">m2</div>
<div class="a" style="left:566px;top:631px;width:1334px;height:1px;background:#d4d4d4"></div>
<div class="a" style="left:566px;top:632px;width:44px;height:26px;background:#fefcca"></div>
<div class="cb" style="top:638px"></div>
<div class="t" style="left:615px;top:635px">014</div>
<div class="t" style="left:678px;top:635px">C01</div>
<div class="t" style="left:742px;top:635px">623135091</div>
<div class="t" style="left:936px;top:634px;letter-spacing:-0.0989px">Příplatek k vyrovnání vnějších sloupů maltou vápenocementovou za každých dalších 5 mm tloušťky</div>
<div class="t" style="left:1815px;top:635px">m2</div>
<div class="a" style="left:566px;top:658px;width:1334px;height:1px;background:#d4d4d4"></div>
<div class="a" style="left:566px;top:659px;width:44px;height:26px;background:#fefcca"></div>
<div class="cb" style="top:665px"></div>
<div class="t" style="left:615px;top:662px">014</div>
<div class="t" style="left:678px;top:662px">C01</div>
<div class="t" style="left:742px;top:662px">621135092</div>
<div class="t" style="left:936px;top:661px;letter-spacing:-0.0854px">Příplatek k vyrovnání vnějších podhledů maltou cementovou za každých dalších 5 mm tloušťky</div>
<div class="t" style="left:1815px;top:662px">m2</div>
<div class="a" style="left:566px;top:685px;width:1334px;height:1px;background:#d4d4d4"></div>
<div class="a" style="left:566px;top:686px;width:44px;height:26px;background:#fefcca"></div>
<div class="cb" style="top:692px"></div>
<div class="t" style="left:615px;top:689px">014</div>
<div class="t" style="left:678px;top:689px">C01</div>
<div class="t" style="left:742px;top:689px">622135092</div>
<div class="t" style="left:936px;top:688px;letter-spacing:-0.0871px">Příplatek k vyrovnání vnějších stěn maltou cementovou za každých dalších 5 mm tloušťky</div>
<div class="t" style="left:1815px;top:689px">m2</div>
<div class="a" style="left:566px;top:712px;width:1334px;height:1px;background:#d4d4d4"></div>
<div class="a" style="left:566px;top:713px;width:44px;height:26px;background:#fefcca"></div>
<div class="cb" style="top:719px"></div>
<div class="t" style="left:615px;top:716px">014</div>
<div class="t" style="left:678px;top:716px">C01</div>
<div class="t" style="left:742px;top:716px">623135092</div>
<div class="t" style="left:936px;top:715px;letter-spacing:-0.0747px">Příplatek k vyrovnání vnějších pilířů nebo sloupů maltou cementovou za každých dalších 5 mm tloušťky</div>
<div class="t" style="left:1815px;top:716px">m2</div>
<div class="a" style="left:566px;top:739px;width:1334px;height:1px;background:#d4d4d4"></div>
<div class="a" style="left:566px;top:740px;width:44px;height:26px;background:#fefcca"></div>
<div class="cb" style="top:746px"></div>
<div class="t" style="left:615px;top:743px">014</div>
<div class="t" style="left:678px;top:743px">C01</div>
<div class="t" style="left:742px;top:743px">621135095</div>
<div class="t" style="left:936px;top:742px;letter-spacing:-0.0811px">Příplatek k vyrovnání vnějších podhledů tmelem za každý další 1 mm tloušťky</div>
<div class="t" style="left:1815px;top:743px">m2</div>
<div class="a" style="left:566px;top:766px;width:1334px;height:1px;background:#d4d4d4"></div>
<div class="a" style="left:566px;top:767px;width:44px;height:26px;background:#fefcca"></div>
<div class="cb" style="top:773px"></div>
<div class="t" style="left:615px;top:770px">014</div>
<div class="t" style="left:678px;top:770px">C01</div>
<div class="t" style="left:742px;top:770px">622135095</div>
<div class="t" style="left:936px;top:769px;letter-spacing:-0.0771px">Příplatek k vyrovnání vnějších stěn tmelem za každý další 1 mm tloušťky</div>
<div class="t" style="left:1815px;top:770px">m2</div>
<div class="a" style="left:566px;top:793px;width:1334px;height:1px;background:#d4d4d4"></div>
<div class="a" style="left:566px;top:794px;width:44px;height:26px;background:#fefcca"></div>
<div class="cb" style="top:800px"></div>
<div class="t" style="left:615px;top:797px">014</div>
<div class="t" style="left:678px;top:797px">C01</div>
<div class="t" style="left:742px;top:797px">623135095</div>
<div class="t" style="left:936px;top:796px;letter-spacing:-0.0643px">Příplatek k vyrovnání vnějších pilířů nebo sloupů tmelem za každý další 1 mm tloušťky</div>
<div class="t" style="left:1815px;top:797px">m2</div>
<div class="a" style="left:566px;top:820px;width:1334px;height:1px;background:#d4d4d4"></div>
<div class="a" style="left:566px;top:847px;width:1334px;height:1px;background:#d4d4d4"></div>
<div class="t" style="left:742px;top:851px">6291351<span class="d">·</span><span class="d">·</span></div>
<div class="t" style="left:928px;top:850px;font-weight:bold;font-size:18.7px;color:#333;letter-spacing:0.0431px">Vyrovnávací vrstva z cementové malty pod klempířskými prvky</div>
<div class="a" style="left:566px;top:874px;width:1334px;height:1px;background:#d4d4d4"></div>
<div class="a" style="left:566px;top:875px;width:44px;height:26px;background:#fefcca"></div>
<div class="cb" style="top:881px"></div>
<div class="t" style="left:615px;top:878px">014</div>
<div class="t" style="left:678px;top:878px">C01</div>
<div class="t" style="left:742px;top:878px">629135101</div>
<div class="t" style="left:936px;top:877px;letter-spacing:-0.0564px">Vyrovnávací vrstva pod klempířské prvky z MC š do 150 mm</div>
<div class="t" style="left:1815px;top:878px">m</div>
<div class="a" style="left:566px;top:901px;width:1334px;height:1px;background:#d4d4d4"></div>
<div class="a" style="left:566px;top:902px;width:44px;height:26px;background:#fefcca"></div>
<div class="cb" style="top:908px"></div>
<div class="t" style="left:615px;top:905px">014</div>
<div class="t" style="left:678px;top:905px">C01</div>
<div class="t" style="left:742px;top:905px">629135102</div>
<div class="t" style="left:936px;top:904px;letter-spacing:-0.0406px">Vyrovnávací vrstva pod klempířské prvky z MC š přes 150 do 300 mm</div>
<div class="t" style="left:1815px;top:905px">m</div>
<div class="a" style="left:566px;top:928px;width:1334px;height:1px;background:#d4d4d4"></div>
<div class="a" style="left:566px;top:955px;width:1334px;height:1px;background:#d4d4d4"></div>
<div class="a" style="left:610px;top:119px;width:1px;height:817px;background:#d4d4d4"></div>
<div class="a" style="left:674px;top:119px;width:1px;height:817px;background:#d4d4d4"></div>
<div class="a" style="left:738px;top:119px;width:1px;height:817px;background:#d4d4d4"></div>
<div class="a" style="left:898px;top:119px;width:1px;height:817px;background:#d4d4d4"></div>
<div class="a" style="left:1810px;top:119px;width:1px;height:817px;background:#d4d4d4"></div>
<div class="a" style="left:899px;top:443px;width:911px;height:26px;border:1px dotted #333"></div>
<svg class="a" style="left:1798px;top:450px" width="9" height="12" viewBox="0 0 9 12"><path d="M0.6 0.6 H5.8 L8.4 3.2 V11.4 H0.6 Z" fill="#eef3f8" stroke="#5d9bcb" stroke-width="1.2"/><path d="M5.8 0.6 V3.2 H8.4" fill="none" stroke="#5d9bcb" stroke-width="0.9"/><rect x="2.2" y="5.2" width="4.6" height="1.1" fill="#5d9bcb"/><rect x="2.2" y="7.4" width="4.6" height="1.1" fill="#9cc0de"/></svg>
<div class="a" style="left:1896px;top:63px;width:2px;height:873px;background:#a8a8a8"></div>
</body></html>
